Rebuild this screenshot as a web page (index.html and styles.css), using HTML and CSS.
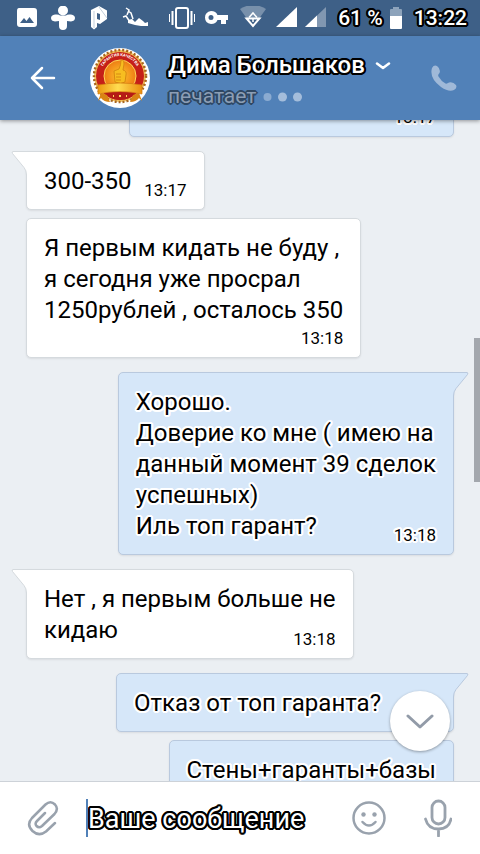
FILE: index.html
```html
<!DOCTYPE html>
<html lang="ru">
<head>
    <meta charset="UTF-8">
    <meta name="viewport" content="width=device-width, initial-scale=1.0">
    <title>Дима Большаков</title>
    <link rel="stylesheet" href="styles.css">
</head>
<body>
    <!-- Bubble tails -->
    <svg class="defs" aria-hidden="true">
        <symbol id="tailIn" viewBox="0 0 18 24">
            <path d="M18 .5H2Q.5.5 1.500 2.500L13 16.500Q15.500 19.500 15.500 24H18z" fill="#fff"/>
            <path d="M18 .5H2Q.5.5 1.500 2.500L13 16.500Q15.500 19.500 15.500 24" fill="none" stroke="#d5dade"/>
        </symbol>
        <symbol id="tailOut" viewBox="0 0 18 24">
            <path d="M0 .5H16Q17.500.5 16.500 2.500L5 16.500Q2.500 19.500 2.500 24H0z" fill="#d6e7f9"/>
            <path d="M0 .5H16Q17.500.5 16.500 2.500L5 16.500Q2.500 19.500 2.500 24" fill="none" stroke="#b9c9de"/>
        </symbol>
    </svg>

    <div class="status-bar">
        <svg class="notifications" width="132" height="24" viewBox="0 0 132 24" fill="#fff">
            <path fill-rule="evenodd" d="M2 2H17Q20 2 20 5V18Q20 21 17 21H3Q0 21 0 18V5Q0 2 2 2zM3 17H17L12.500 11L9.500 15L7 12z"/>
            <circle cx="46" cy="4.500" r="5"/>
            <path d="M38 8.500Q42 8 43 9.500H49Q50 8 54 8.500Q58 9 58 12T54 15.500L50 15V20Q50 24 46 24T42 20V15L38 15.500Q34 15 34 12T38 8.500z"/>
            <path fill-rule="evenodd" d="M74 4L82 0L90 4.500V13L83 18L80 17V21L77 23.500L74 21zM80 7V13L83 14V8z"/>
            <path d="M77 5V22M82 1L90 12" fill="none" stroke="#c3cfdb"/>
            <path d="M109 2L112 4L110 9M111 5L114 7L116 13M106 11L109 10L113 16" fill="none" stroke="#fff" stroke-width="1.500"/>
            <path d="M111 14L115 13L118 16L122 12L126 15L128 17L131 16V20L124 20L118 19L111 17z"/>
        </svg>
        <svg class="system-icons" width="157" height="24" viewBox="0 0 157 24" fill="#fff">
            <rect x="7" y="2" width="12" height="20" rx="2" fill="none" stroke="#fff" stroke-width="2"/>
            <path d="M3.500 5V19M22.500 5V19" stroke="#fff" stroke-width="2"/>
            <path d="M.5 8V16M25.500 8V16" stroke="#fff"/>
            <path fill-rule="evenodd" d="M42 5Q47 5 48.500 9H59V14H57V18H52V14H48.500Q47 18 42 18Q36 17 36 11.500T42 5zM42 9A2.500 2.500 0 1 0 42 14A2.500 2.500 0 1 0 42 9z"/>
            <path d="M71 3Q84 -5 97 3L84 21z" opacity=".3"/>
            <path d="M77.500 12.500H90.500L84 20z" fill="#3e6087" stroke="#fff" stroke-width="2"/>
            <path d="M80 11.500L84 7L88 11.500M84 12V16" fill="none" stroke="#fff" stroke-width="1.500"/>
            <path d="M107 21H128V1z"/>
            <path d="M136 21H157V1z" opacity=".35"/>
            <path d="M136 21H148V9.500z"/>
        </svg>
        <span class="outlined">61 %</span>
        <svg class="battery" width="12" height="22" viewBox="0 0 12 22">
            <path d="M0 3Q0 2 1 2H3V0H9V2H11Q12 2 12 3V11H0z" fill="#8da3bb"/>
            <path d="M0 9H12V21Q12 22 11 22H1Q0 22 0 21z" fill="#fff"/>
        </svg>
        <span class="outlined">13:22</span>
    </div>

    <header class="header">
        <button class="icon-button back" aria-label="Назад">
            <svg width="26" height="24" viewBox="0 0 26 24" fill="none" stroke="#fff" stroke-width="2.500" stroke-linecap="round" stroke-linejoin="round">
                <path d="M24 12H2M12 2L2 12L12 22"/>
            </svg>
        </button>
        <svg class="avatar" width="60" height="60" viewBox="0 0 60 60">
            <defs>
                <linearGradient id="gold" x1="0" x2="1">
                    <stop offset="0" stop-color="#ec9a10"/>
                    <stop offset=".45" stop-color="#ffdc50"/>
                    <stop offset="1" stop-color="#ea8f10"/>
                </linearGradient>
                <radialGradient id="disc">
                    <stop offset="0" stop-color="#ffc62e"/>
                    <stop offset="1" stop-color="#ee7d14"/>
                </radialGradient>
                <path id="arc" d="M11 27A19 19 0 0 1 49 27"/>
            </defs>
            <circle cx="30" cy="30" r="30" fill="#fff"/>
            <circle cx="30" cy="28" r="26" fill="#f4c05c"/>
            <circle cx="30" cy="28" r="26" fill="none" stroke="#a8651e" stroke-width="2.500" stroke-dasharray="2 2"/>
            <circle cx="30" cy="28" r="24" fill="#c51f18"/>
            <circle cx="30" cy="28" r="16" fill="url(#disc)" stroke="#ffd65a"/>
            <text class="seal-text"><textPath href="#arc" startOffset="50%" text-anchor="middle">ГАРАНТИЯ КАЧЕСТВА</textPath></text>
            <path d="M24 23L29 21Q31 17 31 12Q34 11 34 16L33 22Q37 23 36 27L35 34Q31 37 25 34z" fill="#f7bd20" stroke="#d78a12"/>
            <path d="M26 26H31M26 29H31M26 32H31" stroke="#d78a12"/>
            <path d="M14 44H46Q40 52 30 52T14 44z" fill="#b51a16"/>
            <path d="M23 48H24M29 48H31M36 48H37" stroke="#ffd45a" stroke-width="2"/>
            <path d="M11 45L17 47L20 54Q14 54 11 50L8 53zM49 45L43 47L40 54Q46 54 49 50L52 53z" fill="#d98413"/>
            <path d="M8 37Q30 33 52 37V46Q30 41 8 46z" fill="url(#gold)" stroke="#d37a10" stroke-width=".7"/>
        </svg>
        <div class="peer">
            <button class="peer-name outlined">Дима Большаков
                <svg width="16" height="8" viewBox="0 0 16 8" fill="none" stroke="#fff" stroke-width="2.500" stroke-linecap="round" stroke-linejoin="round"><path d="M2 1.500L8 6L14 1.500"/></svg>
            </button>
            <div class="peer-status">печатает
                <svg width="40" height="10" viewBox="0 0 40 10" fill="#a4bddb">
                    <circle cx="4.500" cy="5" r="4" opacity=".7"/>
                    <circle cx="19.500" cy="5" r="4.500"/>
                    <circle cx="34.500" cy="5" r="4.500"/>
                </svg>
            </div>
        </div>
        <button class="icon-button call" aria-label="Позвонить">
            <svg width="28" height="28" viewBox="0 0 28 28" fill="#a0b9d8">
                <path d="M2 4Q4 .5 7 2Q11 5 9.500 9Q7.500 11 8.500 12.500Q11 17 15.500 19.500Q17 20 19 18.500Q23 17.500 26 21Q27.500 24 24 26Q19 28.500 11 23Q-1 14 2 4z"/>
            </svg>
        </button>
    </header>

    <main class="chat">
        <div class="messages">
            <div class="group out">
                <div class="bubble wide">
                    <div class="text"></div>
                    <time>13:17</time>
                </div>
            </div>
            <div class="group in">
                <div class="bubble first">
                    <svg class="tail"><use href="#tailIn"/></svg>
                    <div class="text short">300-350</div>
                    <time>13:17</time>
                </div>
                <div class="bubble">
                    <div class="text full">Я первым кидать не буду ,<br>я сегодня уже просрал<br>1250рублей , осталось 350</div>
                    <time>13:18</time>
                </div>
            </div>
            <div class="group out">
                <div class="bubble first">
                    <svg class="tail"><use href="#tailOut"/></svg>
                    <div class="text">Хорошо.<br>Доверие ко мне ( имею на<br>данный момент 39 сделок<br>успешных)<br>Иль топ гарант?</div>
                    <time>13:18</time>
                </div>
            </div>
            <div class="group in">
                <div class="bubble first">
                    <svg class="tail"><use href="#tailIn"/></svg>
                    <div class="text">Нет , я первым больше не<br>кидаю</div>
                    <time>13:18</time>
                </div>
            </div>
            <div class="group out">
                <div class="bubble first">
                    <svg class="tail"><use href="#tailOut"/></svg>
                    <div class="text short">Отказ от топ гаранта?</div>
                    <time>13:18</time>
                </div>
                <div class="bubble">
                    <div class="text full">Стены+гаранты+базы</div>
                </div>
            </div>
        </div>
        <div class="scroll-thumb"></div>
        <button class="scroll-down" aria-label="Вниз">
            <svg width="28" height="16" viewBox="0 0 28 16" fill="none" stroke="#929ba8" stroke-width="3" stroke-linecap="round" stroke-linejoin="round"><path d="M2 3L14 14L26 3"/></svg>
        </button>
    </main>

    <form class="composer">
        <button type="button" class="icon-button" aria-label="Прикрепить">
            <svg width="32" height="36" viewBox="0 0 32 36" fill="none" stroke="#99a2ad" stroke-width="2.500" stroke-linecap="round" stroke-linejoin="round">
                <path d="M28 23L19 31.500Q12 37 5.500 31Q-1 24.500 5 18L18.500 4.500Q23.500 0 28 4.500Q32 9 27.500 14L15 26Q12 28.500 9.500 26Q7.500 23.500 10 21L18 13"/>
            </svg>
        </button>
        <input class="message-input" type="text" placeholder="Ваше сообщение" aria-label="Ваше сообщение">
        <button type="button" class="icon-button" aria-label="Смайлы">
            <svg width="34" height="34" viewBox="0 0 34 34" fill="none" stroke="#99a2ad" stroke-width="2.500" stroke-linecap="round">
                <circle cx="17" cy="17" r="15.500"/>
                <path d="M10.500 21Q17 28 23.500 21"/>
                <circle cx="11.500" cy="13.500" r="2.200" fill="#99a2ad" stroke="none"/>
                <circle cx="22.500" cy="13.500" r="2.200" fill="#99a2ad" stroke="none"/>
            </svg>
        </button>
        <button type="button" class="icon-button mic" aria-label="Голосовое сообщение">
            <svg width="28" height="38" viewBox="0 0 28 38" fill="none" stroke="#99a2ad" stroke-width="2.800" stroke-linecap="round">
                <rect x="8" y="2" width="13" height="23" rx="6.500"/>
                <path d="M1.500 20Q4 30 14.500 30T27 20M14.500 30V37"/>
            </svg>
        </button>
    </form>
</body>
</html>
```
FILE: styles.css
```css
* {
    box-sizing: border-box;
}

body {
    font-family: Roboto, sans-serif;
    font-size: 24px;
    line-height: 31px;
    color: #000;
    background-color: #ebeff3;
    margin: 0;
    height: 100vh;
    display: flex;
    flex-direction: column;
    overflow: hidden;
}

button {
    background: none;
    border: none;
    padding: 0;
    font: inherit;
    color: inherit;
    cursor: pointer;
}

svg {
    display: block;
    flex-shrink: 0;
}

.defs {
    position: absolute;
    width: 0;
    height: 0;
}

.outlined {
    color: #fff;
    font-weight: 500;
    text-shadow: 2px 0 #000, -2px 0 #000, 0 2px #000, 0 -2px #000,
        1px 2px #000, -1px 2px #000, 1px -2px #000, -1px -2px #000,
        2px 1px #000, -2px 1px #000, 2px -1px #000, -2px -1px #000;
}

/* Status bar */
.status-bar {
    display: flex;
    align-items: center;
    height: 36px;
    padding: 0 13px 0 17px;
    background-color: #3e6087;
    font-size: 21px;
    flex-shrink: 0;
}

.system-icons {
    margin: 0 12px 0 auto;
}

.battery {
    margin: 0 12px 0 7px;
}

/* Header */
.header {
    display: flex;
    align-items: center;
    height: 84px;
    padding: 0 22px 0 30px;
    background-color: #5181b8;
    box-shadow: 0 1px 4px rgba(0, 0, 0, 0.4);
    flex-shrink: 0;
    position: relative;
    z-index: 1;
}

.icon-button {
    display: flex;
    align-items: center;
    justify-content: center;
}

.avatar {
    margin: 0 18px 0 34px;
}

.seal-text {
    font-size: 4px;
    font-weight: 700;
    fill: #fff;
}

.peer {
    flex: 1;
    padding-top: 6px;
}

.peer-name,
.peer-status {
    display: flex;
    align-items: center;
    gap: 10px;
}

.peer-status {
    gap: 7px;
    font-size: 21px;
    color: #8c9eb5;
    text-shadow: 2px 0 #2e4763, -2px 0 #2e4763, 0 2px #2e4763, 0 -2px #2e4763,
        1px 1px #2e4763, -1px 1px #2e4763, 1px -1px #2e4763, -1px -1px #2e4763;
}

/* Chat */
.chat {
    flex: 1;
    min-height: 0;
    overflow: hidden;
    position: relative;
}

/* the list is scrolled, the first message is partly under the header */
.messages {
    display: flex;
    flex-direction: column;
    gap: 14px;
    margin-top: -42px;
    padding: 0 26px;
}

.group {
    display: flex;
    flex-direction: column;
    align-items: flex-start;
    gap: 8px;
}

.group.out {
    align-items: flex-end;
}

.bubble {
    display: grid;
    position: relative;
    padding: 14px 17px 9px;
    background-color: #fff;
    border: 1px solid #d5dade;
    border-radius: 5px;
    box-shadow: 0 1px 2px rgba(0, 0, 0, 0.08);
}

.out .bubble {
    background-color: #d6e7f9;
    border-color: #b9c9de;
    text-shadow: 2px 0 #fff, -2px 0 #fff, 0 2px #fff, 0 -2px #fff,
        1px 2px #fff, -1px 2px #fff, 1px -2px #fff, -1px -2px #fff,
        2px 1px #fff, -2px 1px #fff, 2px -1px #fff, -2px -1px #fff;
}

.bubble.wide {
    width: 76%;
}

.in .first {
    border-top-left-radius: 0;
}

.out .first {
    border-top-right-radius: 0;
}

.tail {
    position: absolute;
    top: -1px;
    width: 18px;
    height: 24px;
}

.in .tail {
    left: -16px;
}

.out .tail {
    right: -16px;
}

.text,
.bubble time {
    grid-row: 1;
    grid-column: 1;
}

.text {
    min-height: 31px;
    margin-bottom: 3px;
}

.text.short {
    padding-right: 55px;
}

.text.full + time {
    grid-row: 2;
}

.bubble time {
    align-self: end;
    justify-self: end;
    font-size: 17px;
    line-height: 19px;
}

.scroll-thumb {
    position: absolute;
    right: 0;
    top: 33%;
    width: 6px;
    height: 144px;
    background-color: #a3a7ad;
}

.scroll-down {
    position: absolute;
    right: 30px;
    bottom: 30px;
    width: 60px;
    height: 60px;
    display: flex;
    align-items: center;
    justify-content: center;
    background-color: #fff;
    border-radius: 50%;
    box-shadow: 0 1px 3px rgba(0, 0, 0, 0.35);
}

/* Composer */
.composer {
    display: flex;
    align-items: center;
    height: 73px;
    padding: 0 28px 0 27px;
    background-color: #fff;
    border-top: 1px solid #cdd2d8;
    flex-shrink: 0;
}

.message-input {
    flex: 1;
    min-width: 0;
    height: 38px;
    margin: 0 12px 0 27px;
    padding: 2px 0 0;
    border: none;
    border-left: 2px solid #5181b8;
    outline: none;
    background: none;
    font: inherit;
    font-size: 27px;
}

.message-input::placeholder {
    color: #fff;
    opacity: 1;
    text-shadow: 2px 0 #000, -2px 0 #000, 0 2px #000, 0 -2px #000,
        1px 2px #000, -1px 2px #000, 1px -2px #000, -1px -2px #000,
        2px 1px #000, -2px 1px #000, 2px -1px #000, -2px -1px #000;
}

.mic {
    margin-left: 38px;
}
```
